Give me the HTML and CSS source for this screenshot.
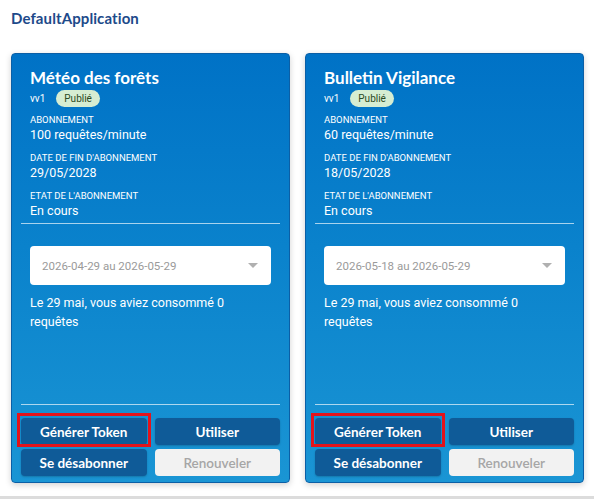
FILE: index.html
```html
<!DOCTYPE html>
<html lang="fr">
<head>
<meta charset="utf-8">
<title>DefaultApplication</title>
<link rel="stylesheet" href="styles.css">
</head>
<body>
<div class="page">
  <h1 class="app-title">DefaultApplication</h1>
  <div class="cards">
    <section class="card">
      <div class="card-head">
        <h2 class="api-name">Météo des forêts</h2>
        <div class="version-row"><span class="version">vv1</span><span class="badge">Publié</span></div>
        <div class="field"><div class="label">Abonnement</div><div class="value">100 requêtes/minute</div></div>
        <div class="field"><div class="label">Date de fin d'abonnement</div><div class="value">29/05/2028</div></div>
        <div class="field"><div class="label">Etat de l'abonnement</div><div class="value">En cours</div></div>
      </div>
      <div class="card-body">
        <div class="select"><span class="select-text">2026-04-29 au 2026-05-29</span><span class="caret"></span></div>
        <p class="usage">Le 29 mai, vous aviez consommé 0 requêtes</p>
      </div>
      <div class="actions">
        <button class="btn highlighted">Générer Token</button>
        <button class="btn">Utiliser</button>
        <button class="btn">Se désabonner</button>
        <button class="btn disabled">Renouveler</button>
      </div>
    </section>
    <section class="card">
      <div class="card-head">
        <h2 class="api-name">Bulletin Vigilance</h2>
        <div class="version-row"><span class="version">vv1</span><span class="badge">Publié</span></div>
        <div class="field"><div class="label">Abonnement</div><div class="value">60 requêtes/minute</div></div>
        <div class="field"><div class="label">Date de fin d'abonnement</div><div class="value">18/05/2028</div></div>
        <div class="field"><div class="label">Etat de l'abonnement</div><div class="value">En cours</div></div>
      </div>
      <div class="card-body">
        <div class="select"><span class="select-text">2026-05-18 au 2026-05-29</span><span class="caret"></span></div>
        <p class="usage">Le 29 mai, vous aviez consommé 0 requêtes</p>
      </div>
      <div class="actions">
        <button class="btn highlighted">Générer Token</button>
        <button class="btn">Utiliser</button>
        <button class="btn">Se désabonner</button>
        <button class="btn disabled">Renouveler</button>
      </div>
    </section>
  </div>
</div>
</body>
</html>
```
FILE: styles.css
```css
* { box-sizing: border-box; }
html, body { margin: 0; padding: 0; }
body {
  font-family: Roboto, "Liberation Sans", sans-serif;
  background: #fff;
  width: 594px;
  height: 499px;
  overflow: hidden;
  position: relative;
}
body::after {
  content: "";
  position: absolute;
  left: 0; right: 0; bottom: 0;
  height: 3px;
  background: #dcdcdc;
}
.page { padding: 9px 10px 0 11px; }
.app-title {
  margin: 0;
  font-family: Lato, "Open Sans", sans-serif;
  font-weight: 700;
  font-size: 15px;
  line-height: 18px;
  color: #1d4a8a;
  letter-spacing: 0.1px;
}
.cards {
  margin-top: 26px;
  display: grid;
  grid-template-columns: 279px 279px;
  column-gap: 15px;
}
.card {
  height: 430px;
  border: 1px solid #0b5fa6;
  border-radius: 4px;
  background: linear-gradient(180deg, #0072c6 0%, #0a82cc 45%, #1a95d4 100%);
  box-shadow: 0 2px 6px rgba(0,0,0,0.18);
  display: flex;
  flex-direction: column;
  padding: 0 9px;
  color: #fff;
}
.card-head {
  padding: 14px 9px 4px;
  border-bottom: 1px solid rgba(255,255,255,0.65);
}
.api-name {
  margin: 0;
  font-family: Lato, "Open Sans", sans-serif;
  font-weight: 700;
  font-size: 17px;
  line-height: 20px;
}
.version-row {
  display: flex;
  align-items: center;
  gap: 11px;
  margin-top: 1px;
  height: 18px;
}
.version { font-size: 10px; }
.badge {
  background: #d6edd2;
  color: #2c4a22;
  font-size: 10px;
  line-height: 17px;
  padding: 0 8px;
  border-radius: 9px;
}
.field { margin-top: 8px; }
.version-row + .field { margin-top: 6px; }
.label {
  text-transform: uppercase;
  font-size: 9.5px;
  line-height: 13px;
}
.value {
  font-size: 12.5px;
  line-height: 17px;
}
.card-body {
  flex: 1;
  padding: 22px 9px 0;
}
.select {
  height: 39px;
  background: #fff;
  border-radius: 4px;
  display: flex;
  align-items: center;
  justify-content: space-between;
  padding: 0 12px 0 12px;
}
.select-text {
  color: #9a9a9a;
  font-size: 11.5px;
}
.caret {
  width: 0; height: 0;
  border-left: 5px solid transparent;
  border-right: 5px solid transparent;
  border-top: 5px solid #b0b0b0;
  margin-right: 1px;
}
.usage {
  margin: 8px 0 0;
  font-size: 12.5px;
  line-height: 19px;
  padding-right: 12px;
}
.actions {
  border-top: 1px solid rgba(255,255,255,0.65);
  padding: 13px 0 6px;
  display: grid;
  grid-template-columns: 1fr 1fr;
  gap: 4px 8px;
}
.btn {
  position: relative;
  height: 27px;
  border: 0;
  border-radius: 4px;
  background: #0f5b98;
  color: #fff;
  font-family: Lato, "Open Sans", sans-serif;
  font-weight: 700;
  font-size: 13.5px;
  box-shadow: 0 1px 2px rgba(0,0,0,0.2);
  padding: 0;
}
.btn.disabled {
  background: #f2f2f2;
  color: #a6a6a6;
  font-weight: 600;
  box-shadow: none;
}
.btn.highlighted::after {
  content: "";
  position: absolute;
  top: -5px; left: -4px; right: -4px; bottom: -2px;
  border: 3px solid #e3131b;
}
```
